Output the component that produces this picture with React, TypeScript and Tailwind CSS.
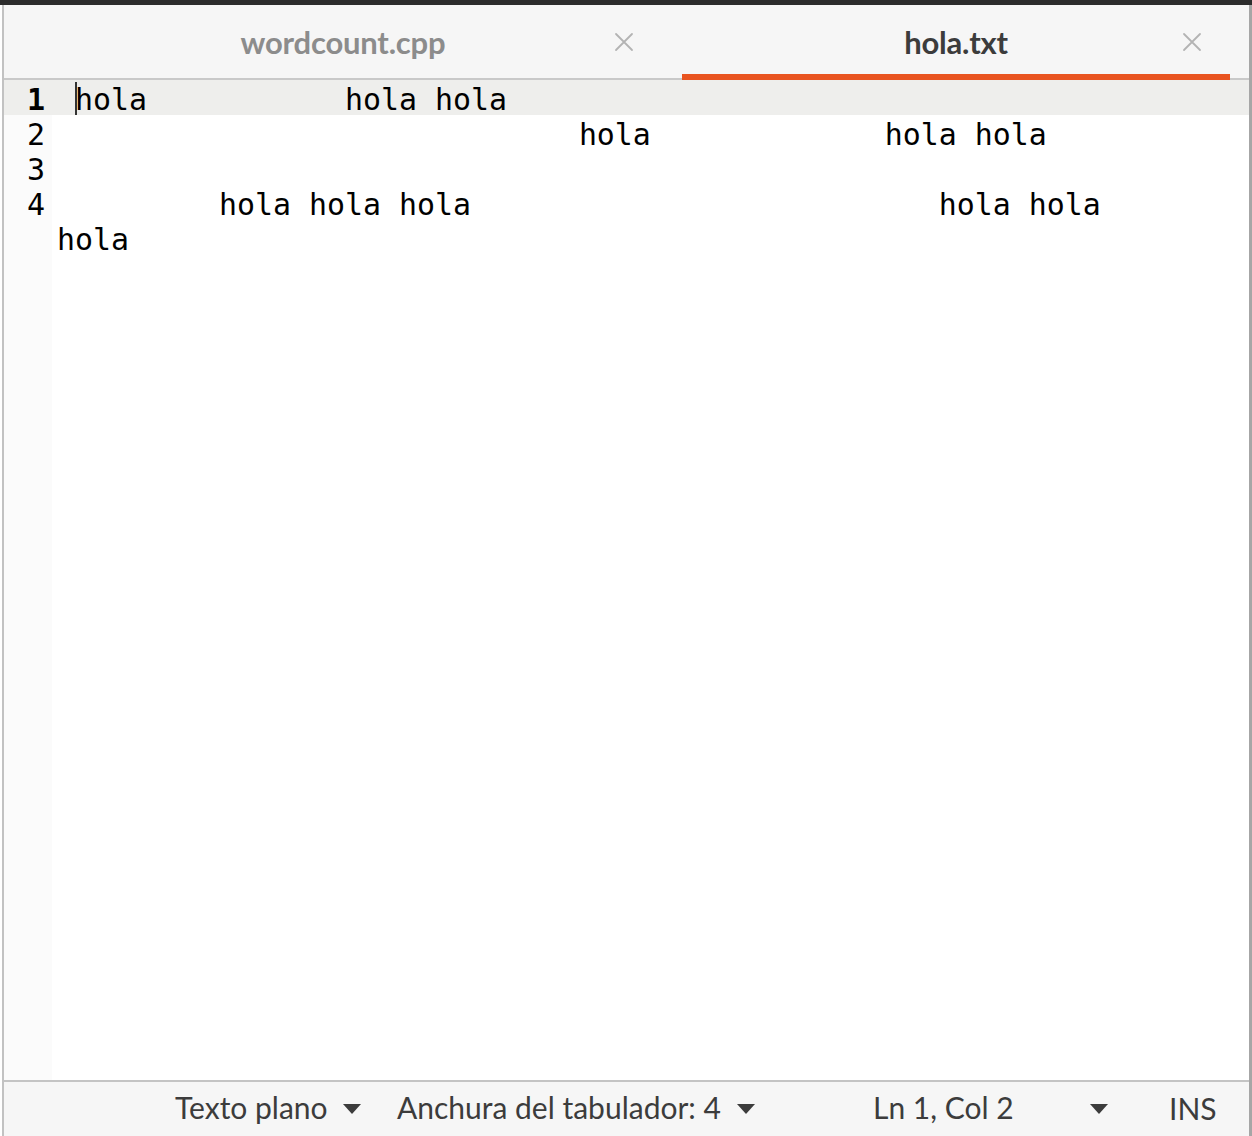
import React from 'react';

const mono = { fontFamily: '"DejaVu Sans Mono", monospace' };

function CloseX() {
    return (
        <svg width="20" height="20" viewBox="0 0 20 20" className="block">
            <path d="M2 2 L18 18 M18 2 L2 18" stroke="#b3b3b3" strokeWidth="1.8" strokeLinecap="round" />
        </svg>
    );
}

function Caret() {
    return (
        <svg width="18" height="10" viewBox="0 0 18 10" className="block">
            <path d="M0 0 H18 L9 10 Z" fill="#3c3c3c" />
        </svg>
    );
}

// each line: [line number, text] ; null number = wrapped continuation
const lines: { num: string | null; text: string; current?: boolean }[] = [
    { num: '1', text: 'hola           hola hola', current: true },
    { num: '2', text: '                            hola             hola hola' },
    { num: '3', text: '' },
    { num: '4', text: '        hola hola hola                          hola hola' },
    { num: null, text: 'hola' },
];

export default function App() {
    return (
        <div className="w-[1252px] h-[1136px] flex flex-col bg-white overflow-hidden" style={{ fontFamily: 'Lato, "Noto Sans", sans-serif' }}>
            {/* window top edge */}
            <div className="h-[5px] bg-[#2c2c2c] shrink-0" />

            <div className="flex-1 flex flex-col ml-[2px] border-l-2 border-r-[3px] border-l-[#c2c2c2] border-r-[#a6a6a6] min-h-0">
                {/* Tabs */}
                <div className="flex h-[75px] bg-[#f6f6f6] shrink-0">
                    <div className="relative w-[678px] border-b-2 border-[#c9c9c9] flex items-center justify-center">
                        <span className="text-[31px] font-bold text-[#8c8c8c] tracking-[-0.2px] pt-[2px]">wordcount.cpp</span>
                        <div className="absolute right-[48px] top-[27px]"><CloseX /></div>
                    </div>
                    <div className="relative w-[548px] border-b-[6px] border-[#e95420] flex items-center justify-center">
                        <span className="text-[31px] font-bold text-[#3c3c3c] tracking-[-0.2px] pt-[6px]">hola.txt</span>
                        <div className="absolute right-[28px] top-[27px]"><CloseX /></div>
                    </div>
                    <div className="flex-1 border-b-2 border-[#c9c9c9]" />
                </div>

                {/* Editor */}
                <div className="flex-1 flex flex-col min-h-0" style={mono}>
                    {lines.map((l, i) => (
                        <div key={i} className={`flex h-[35px] ${l.current ? 'bg-[#eeeeec]' : ''}`}>
                            <div className={`w-[48px] shrink-0 text-right pr-[7px] pt-[2px] text-[30px] leading-[35px] text-black ${l.current ? 'font-bold' : 'bg-[#fbfbfb]'}`}>
                                {l.num}
                            </div>
                            {l.num === null ? (
                                <div className="relative -ml-[43px] pl-[48px] pt-[2px] text-[29.9px] leading-[35px] text-black whitespace-pre">
                                    {l.text}
                                </div>
                            ) : (
                                <div className="flex-1 flex pl-[23px] pt-[2px] text-[29.9px] leading-[35px] text-black whitespace-pre">
                                    {l.current && <div className="w-[2px] h-[33px] -mr-[2px] bg-[#333]" />}
                                    {l.text}
                                </div>
                            )}
                        </div>
                    ))}
                    <div className="flex-1 flex">
                        <div className="w-[48px] shrink-0 bg-[#fbfbfb]" />
                        <div className="flex-1" />
                    </div>
                </div>

                {/* Status bar */}
                <div className="h-[56px] shrink-0 border-t-2 border-[#c4c4c4] bg-[#f6f6f6] flex items-center text-[30px] text-[#3c3c3c]">
                    <div className="w-[171px] shrink-0" />
                    <div className="w-[168px] shrink-0 -mt-[3px]">Texto plano</div>
                    <Caret />
                    <div className="w-[36px] shrink-0" />
                    <div className="w-[340px] shrink-0 -mt-[3px]">Anchura del tabulador: 4</div>
                    <Caret />
                    <div className="w-[118px] shrink-0" />
                    <div className="w-[217px] shrink-0 -mt-[3px]">Ln 1, Col 2</div>
                    <div className="w-[20px] shrink-0"><Caret /></div>
                    <div className="w-[59px] shrink-0" />
                    <div className="-mt-[1px]">INS</div>
                </div>
            </div>
        </div>
    );
}
